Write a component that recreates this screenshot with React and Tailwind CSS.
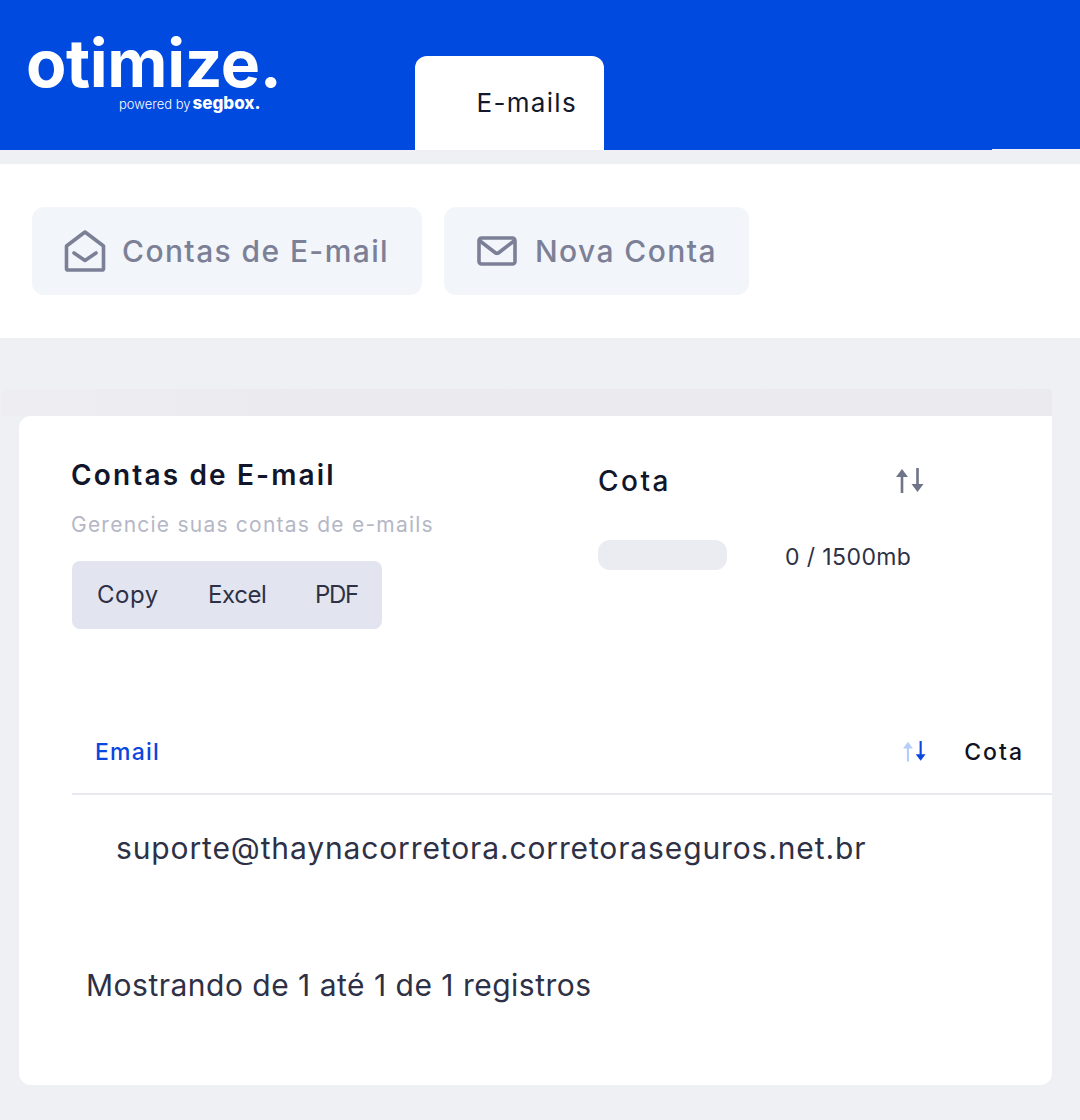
const sans = "font-['Inter','Liberation_Sans',sans-serif]";

function OpenMailIcon() {
  return (
    <svg width="42" height="42" viewBox="0 0 42 42" fill="none" stroke="#7C8097" strokeWidth="3.6" strokeLinejoin="round" strokeLinecap="round">
      <path d="M2.500 16 21 2l18.500 14v22.400a1.600 1.600 0 0 1-1.600 1.600H4.100a1.600 1.600 0 0 1-1.600-1.600z" />
      <path d="M10 23l11 7.500L32 23" />
    </svg>
  );
}

function MailIcon() {
  return (
    <svg width="40" height="30" viewBox="0 0 40 30" fill="none" stroke="#7C8097" strokeWidth="3.6" strokeLinejoin="round" strokeLinecap="round">
      <rect x="2" y="2" width="36" height="26" rx="2.500" />
      <path d="M3 5l15 11.500a3.200 3.200 0 0 0 4 0L37 5" />
    </svg>
  );
}

function SortIcon({ up, down, size = 28 }) {
  return (
    <svg width={size} height={(size * 26) / 28} viewBox="0 0 28 26" fill="none">
      <path d="M6 25V7" stroke={up} strokeWidth="2.6" />
      <path d="M6 1l6 8H0z" fill={up} />
      <path d="M21.500 0v18" stroke={down} strokeWidth="2.6" />
      <path d="M21.500 24l6-8h-12z" fill={down} />
    </svg>
  );
}

function ActionButton({ icon, label, className }) {
  return (
    <div className={`flex h-[88px] items-center rounded-xl bg-[#F2F5F9] ${className}`}>
      {icon}
      <span className="text-[30px] leading-none font-medium tracking-[1.4px] text-[#7C8097]">{label}</span>
    </div>
  );
}

export default function App() {
  return (
    <div className={`h-[1120px] w-[1080px] overflow-hidden bg-[#EFF0F4] ${sans}`}>
      <header className="relative flex h-[150px] bg-[#004ADF]">
        <div className="flex w-[415px] flex-col pt-[33px] pl-[26px]">
          <div className="text-[66px] leading-[60px] font-bold tracking-[-0.4px] text-white">otimize.</div>
          <div className="mt-[2px] ml-[93px] flex items-baseline gap-[2px] text-white">
            <span className="text-[13px] leading-[16px] font-light">powered by</span>
            <span className="text-[17px] leading-[16px] font-extrabold">segbox.</span>
          </div>
        </div>
        <div className="mt-[56px] flex h-[94px] w-[189px] justify-end rounded-t-xl bg-white pt-[30px] pr-[27px]">
          <span className="text-[26px] leading-[34px] tracking-[1.3px] text-[#14182B]">E-mails</span>
        </div>
        <div className="absolute right-0 bottom-0 h-px w-[88px] bg-[#EFF0F4]" />
      </header>

      <section className="mt-[14px] flex h-[174px] items-start gap-[22px] bg-white pt-[43px] pl-[32px]">
        <ActionButton className="w-[390px] gap-[16px] pl-[32px]" icon={<OpenMailIcon />} label="Contas de E-mail" />
        <ActionButton className="w-[305px] gap-[18px] pl-[33px]" icon={<MailIcon />} label="Nova Conta" />
      </section>

      <div className="mt-[51px] ml-[2px] h-[27px] w-[1050px] rounded-t-sm bg-gradient-to-r from-[#EDEDF2] to-[#EAEAEF] to-30%" />

      <main className="ml-[19px] flex h-[669px] w-[1033px] flex-col rounded-l-xl rounded-br-xl bg-white">
        <div className="flex h-[214px] pl-[53px]">
          <div className="w-[526px] pt-[41px]">
            <h1 className="-ml-[1px] text-[28px] leading-[36px] font-semibold tracking-[2.15px] text-[#12162B]">Contas de E-mail</h1>
            <p className="mt-[19px] -ml-[1px] text-[21px] leading-[26px] tracking-[1.23px] text-[#B5B7C6]">Gerencie suas contas de e-mails</p>
            <div className="mt-[23px] flex h-[68px] w-[310px] items-center rounded-lg bg-[#E2E5EF] pl-[25px] text-[24px] text-[#2E3146]">
              <span className="w-[111px] tracking-[0.5px]">Copy</span>
              <span className="w-[107px] tracking-[-0.4px]">Excel</span>
              <span className="tracking-[-1.3px]">PDF</span>
            </div>
          </div>
          <div className="w-[326px] pt-[47px]">
            <div className="flex items-center justify-between">
              <span className="text-[28px] leading-[36px] font-medium tracking-[2.5px] text-[#12162B]">Cota</span>
              <SortIcon up="#6F7488" down="#6F7488" />
            </div>
            <div className="mt-[41px] flex items-start gap-[58px]">
              <div className="h-[30px] w-[129px] rounded-xl bg-[#EBECF2]" />
              <span className="mt-[2px] text-[23px] leading-[30px] tracking-[0.4px] text-[#2E3146]">0 / 1500mb</span>
            </div>
          </div>
        </div>

        <div className="mt-[84px] ml-[53px] flex h-[81px] items-center border-b-2 border-[#E8E9F0] pr-[28px] pb-[3px]">
          <span className="ml-[23px] flex-1 text-[23px] font-medium tracking-[1.2px] text-[#0B46DE]">Email</span>
          <SortIcon up="#B5CDFB" down="#0B46DE" size={23} />
          <span className="ml-[38px] text-[23px] font-medium tracking-[2px] text-[#0F1220]">Cota</span>
        </div>

        <div className="mt-[33px] ml-[97px] text-[30px] leading-[40px] tracking-[0.87px] text-[#2E3146]">suporte@thaynacorretora.corretoraseguros.net.br</div>
        <div className="mt-[97px] ml-[67px] text-[30px] leading-[40px] tracking-[0.49px] text-[#2E3146]">Mostrando de 1 até 1 de 1 registros</div>
      </main>
    </div>
  );
}
